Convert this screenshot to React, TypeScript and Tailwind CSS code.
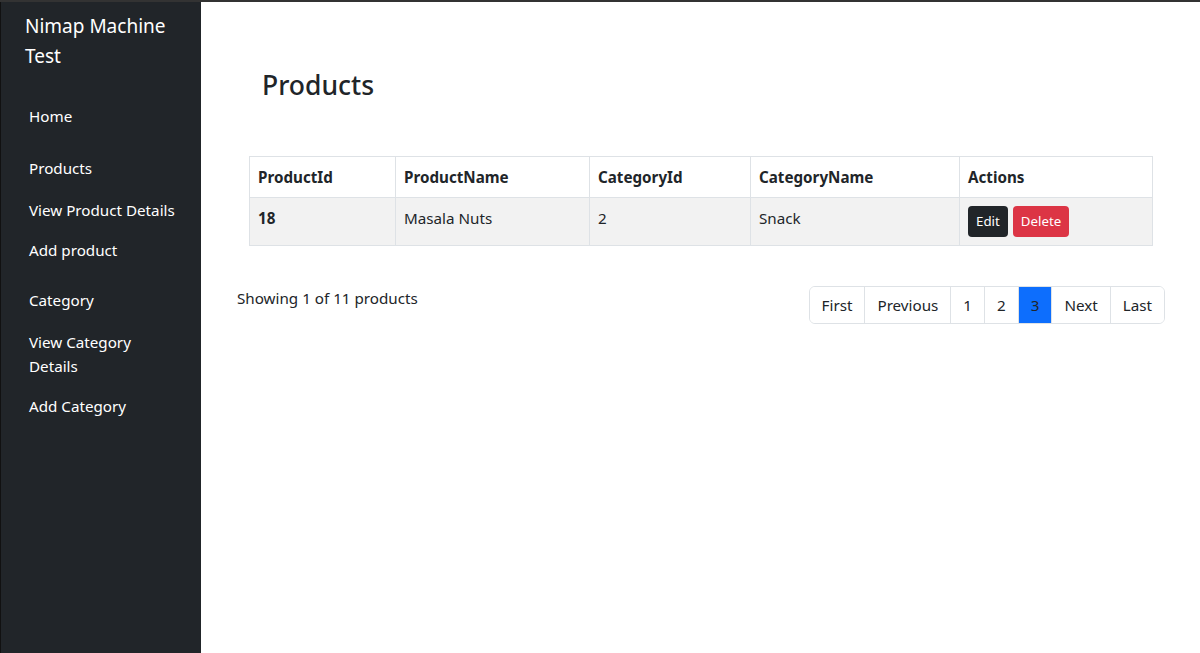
import React from "react";

const font = { fontFamily: '"Noto Sans", "Open Sans", sans-serif' };

function NavItem({ children, className = "" }: { children: React.ReactNode; className?: string }) {
  return <div className={`text-[15.2px] leading-[24px] text-white ${className}`}>{children}</div>;
}

export default function App() {
  const pages = ["First", "Previous", "1", "2", "3", "Next", "Last"];
  return (
    <div className="flex min-h-[653px] w-full border-t-2 border-[#333] bg-white text-[#212529]" style={font}>
      <aside className="w-[201px] shrink-0 border-l border-[#111] bg-[#212529] pl-[24px] pr-3">
        <div className="pt-[9px] text-[19px] leading-[30px] text-white">Nimap Machine Test</div>
        <div className="pl-[4px]">
          <NavItem className="mt-[33px]">Home</NavItem>
          <NavItem className="mt-[28px]">Products</NavItem>
          <NavItem className="mt-[18px]">View Product Details</NavItem>
          <NavItem className="mt-[16px]">Add product</NavItem>
          <NavItem className="mt-[26px]">Category</NavItem>
          <NavItem className="mt-[18px] w-[130px]">View Category Details</NavItem>
          <NavItem className="mt-[16px]">Add Category</NavItem>
        </div>
      </aside>
      <main className="flex-1 pl-[36px] pr-[35px]">
        <h3 className="ml-[25px] mt-[66px] text-[26.5px] font-medium leading-[34px]">Products</h3>
        <div className="mx-[12px] mt-[54px]">
          <table className="w-full border-collapse text-[15.2px] leading-[24px]">
            <thead>
              <tr className="bg-white">
                <th className="w-[146px] border border-[#dee2e6] px-2 py-2 text-left font-bold">ProductId</th>
                <th className="w-[194px] border border-[#dee2e6] px-2 py-2 text-left font-bold">ProductName</th>
                <th className="w-[161px] border border-[#dee2e6] px-2 py-2 text-left font-bold">CategoryId</th>
                <th className="w-[209px] border border-[#dee2e6] px-2 py-2 text-left font-bold">CategoryName</th>
                <th className="border border-[#dee2e6] px-2 py-2 text-left font-bold">Actions</th>
              </tr>
            </thead>
            <tbody>
              <tr className="bg-[#f2f2f2]">
                <td className="border border-[#dee2e6] px-2 py-2 align-top font-bold">18</td>
                <td className="border border-[#dee2e6] px-2 py-2 align-top">Masala Nuts</td>
                <td className="border border-[#dee2e6] px-2 py-2 align-top">2</td>
                <td className="border border-[#dee2e6] px-2 py-2 align-top">Snack</td>
                <td className="border border-[#dee2e6] px-2 py-2 align-top">
                  <div className="flex gap-[5px]">
                    <button className="h-[31px] rounded-[4px] bg-[#212529] px-2 text-[13.3px] leading-[21px] text-white">Edit</button>
                    <button className="h-[31px] rounded-[4px] bg-[#dc3545] px-2 text-[13.3px] leading-[21px] text-white">Delete</button>
                  </div>
                </td>
              </tr>
            </tbody>
          </table>
        </div>
        <div className="mt-[40px] flex items-start justify-between">
          <div className="text-[15.2px] leading-[24px]">Showing 1 of 11 products</div>
          <div className="flex overflow-hidden rounded-[6px] border border-[#dee2e6]">
            {pages.map((p, i) => (
              <div
                key={p}
                className={`px-3 py-[6px] text-[15.2px] leading-[24px] ${i > 0 ? "border-l border-[#dee2e6]" : ""} ${p === "3" ? "border-[#0d6efd] bg-[#0d6efd] text-[#212529]" : "bg-white text-[#212529]"}`}
              >
                {p}
              </div>
            ))}
          </div>
        </div>
      </main>
    </div>
  );
}
